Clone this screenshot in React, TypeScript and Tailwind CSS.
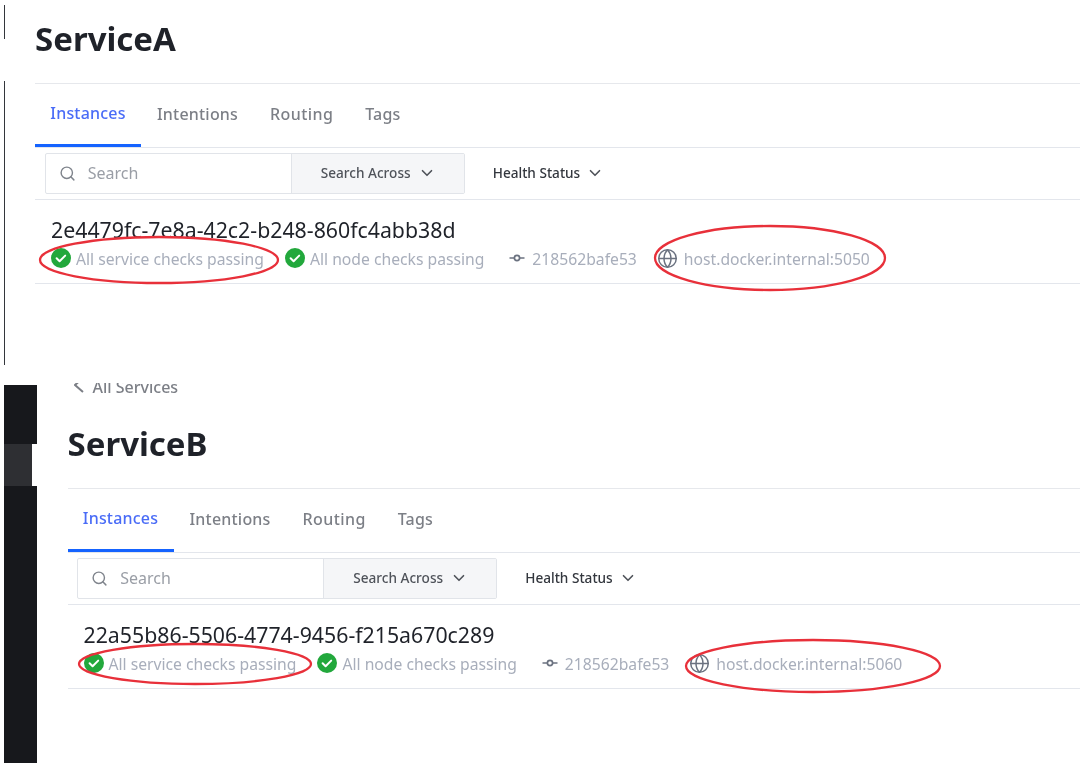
import React from 'react';
import { ChevronDown, Globe, Search } from 'lucide-react';

const CheckBadge = () => (
  <svg className="w-5 h-5 shrink-0 -mt-[3px]" viewBox="0 0 20 20">
    <circle cx="10" cy="10" r="10" fill="#22a83c" />
    <path d="M5.6 10.3l3 2.9 5.6-5.6" fill="none" stroke="#fff" strokeWidth="2" strokeLinecap="round" strokeLinejoin="round" />
  </svg>
);

const CommitIcon = () => (
  <svg className="w-4 h-4 shrink-0 -mt-[3px]" viewBox="0 0 16 16" fill="none" stroke="#6b7280" strokeWidth="1.7">
    <circle cx="8" cy="8" r="2.6" />
    <path d="M0.5 8h4.9M10.6 8h4.9" />
  </svg>
);

interface ServicePanelProps {
  name: string;
  uuid: string;
  address: string;
}

const ServicePanel: React.FC<ServicePanelProps> = ({ name, uuid, address }) => (
  <div className="flex-1 min-w-0">
    {/* title */}
    <div className="h-[84px] pb-[6px] flex items-center border-b border-[#e6e8ec]">
      <h1 className="text-[33px] leading-none font-bold text-[#1f2229]">{name}</h1>
    </div>

    {/* tabs */}
    <div className="h-[64px] flex border-b border-[#e3e6ec] text-base font-medium tracking-[0.2px] text-[#7c7f86]">
      <div className="w-[106px] h-[63px] pb-[2px] flex items-center justify-center text-[#4a6cf7] border-b-[3px] border-[#1563ff]">Instances</div>
      <div className="ml-[16px] pb-[3px] flex items-center">Intentions</div>
      <div className="ml-[32px] pb-[3px] flex items-center tracking-[0.4px]">Routing</div>
      <div className="ml-[32px] pb-[3px] flex items-center">Tags</div>
    </div>

    {/* search bar */}
    <div className="h-[52px] flex items-center pl-[9.75px] pb-[6px] pt-[5px] border-b border-[#e3e6ec]">
      <div className="w-[420px] h-[41px] flex border border-[#e1e4e9] rounded-[2px]">
        <div className="w-[245px] flex items-center gap-[12px] pl-[13px] text-base text-[#9a9ea6]">
          <Search className="w-[17px] h-[17px] text-[#7f848c]" strokeWidth={2} />
          Search
        </div>
        <div className="flex-1 flex items-center gap-[7px] pl-[29px] bg-[#f5f6f8] border-l border-[#e1e4e9] text-[13.6px] font-medium text-[#4f535a]">
          Search Across
          <ChevronDown className="w-[18px] h-[18px] text-[#4f535a]" strokeWidth={2.2} />
        </div>
      </div>
      <div className="ml-[28px] flex items-center gap-[6px] text-[13.6px] font-medium text-[#33373e]">
        Health Status
        <ChevronDown className="w-[18px] h-[18px] text-[#4f535a]" strokeWidth={2.2} />
      </div>
    </div>

    {/* instance row */}
    <div className="h-[84px] pl-[16px] pt-[16px] border-b border-[#e3e6ec]">
      <div className="text-[21.3px] leading-[28px] text-[#1f2229]">{uuid}</div>
      <div className="mt-[3px] flex items-center text-[15.7px] leading-[24px] text-[#a8aebb]">
        <CheckBadge />
        <span className="ml-[5px]">All service checks passing</span>
        <span className="ml-[21px]"><CheckBadge /></span>
        <span className="ml-[5px]">All node checks passing</span>
        <span className="ml-[25px]"><CommitIcon /></span>
        <span className="ml-[7px]">218562bafe53</span>
        <Globe className="ml-[20px] w-[21px] h-[21px] shrink-0 -mt-[2px] text-[#6b7280]" strokeWidth={1.7} />
        <span className="ml-[6px]">{address}</span>
      </div>
    </div>
  </div>
);

export default function App() {
  return (
    <div
      className="relative w-[1080px] h-[768px] overflow-hidden bg-white blur-[0.5px]"
      style={{ fontFamily: '"Noto Sans", "Liberation Sans", sans-serif' }}
    >
      {/* first capture */}
      <div className="h-[383px] flex">
        <div className="w-[35px] shrink-0 pl-[4px]">
          <div className="mt-[5px] w-px h-[34px] bg-[#33363b]" />
          <div className="mt-[42px] w-px h-[284px] bg-[#33363b]" />
        </div>
        <ServicePanel name="ServiceA" uuid="2e4479fc-7e8a-42c2-b248-860fc4abb38d" address="host.docker.internal:5050" />
      </div>

      {/* second capture */}
      <div className="h-[385px] flex">
        <div className="w-[67.5px] shrink-0 pl-[4px] pt-[2px]">
          <div className="w-[33px] h-[59px] bg-[#17181c]" />
          <div className="w-[28px] h-[42px] bg-[#2e2f33]" />
          <div className="w-[33px] h-[277px] bg-[#17181c]" />
        </div>
        <div className="flex-1 min-w-0">
          {/* back link, cut by the top of the capture */}
          <div className="h-[22px] overflow-hidden">
            <div className="-mt-[8px] pl-[6px] flex items-center gap-[9px] text-base leading-[24px] font-medium text-[#7c7f86]">
              <svg className="w-[10px] h-[16px] -mt-[5px]" viewBox="0 0 10 16" fill="none" stroke="#7c7f86" strokeWidth="2">
                <path d="M9 1L1 8l8 7" />
              </svg>
              All Services
            </div>
          </div>
          <ServicePanel name="ServiceB" uuid="22a55b86-5506-4774-9456-f215a670c289" address="host.docker.internal:5060" />
        </div>
      </div>

      {/* hand drawn annotations */}
      <svg className="absolute inset-0 w-[1080px] h-[768px] pointer-events-none" viewBox="0 0 1080 768" fill="none" stroke="#e8303a" strokeWidth="2.3">
        <ellipse cx="159" cy="260" rx="119" ry="23" />
        <ellipse cx="770" cy="258" rx="115" ry="32" />
        <ellipse cx="195" cy="664" rx="116" ry="20" />
        <ellipse cx="813" cy="666" rx="127" ry="26" />
      </svg>
    </div>
  );
}
